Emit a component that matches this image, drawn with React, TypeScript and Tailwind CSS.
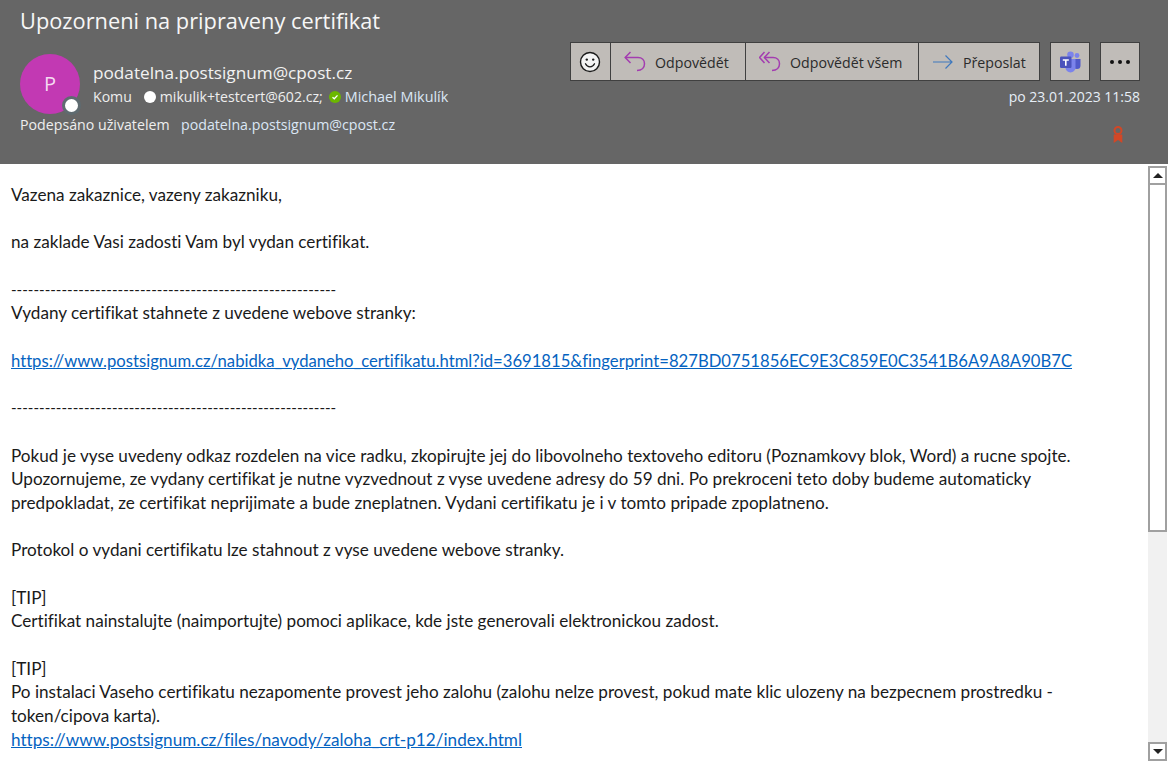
const URL1 = "https://www.postsignum.cz/nabidka_vydaneho_certifikatu.html?id=3691815&fingerprint=827BD0751856EC9E3C859E0C3541B6A9A8A90B7C";
const URL2 = "https://www.postsignum.cz/files/navody/zaloha_crt-p12/index.html";
const DASHES = "----------------------------------------------------------";

const lines = [
    "Vazena zakaznice, vazeny zakazniku,",
    "",
    "na zaklade Vasi zadosti Vam byl vydan certifikat.",
    "",
    DASHES,
    "Vydany certifikat stahnete z uvedene webove stranky:",
    "",
    URL1,
    "",
    DASHES,
    "",
    "Pokud je vyse uvedeny odkaz rozdelen na vice radku, zkopirujte jej do libovolneho textoveho editoru (Poznamkovy blok, Word) a rucne spojte.",
    "Upozornujeme, ze vydany certifikat je nutne vyzvednout z vyse uvedene adresy do 59 dni. Po prekroceni teto doby budeme automaticky",
    "predpokladat, ze certifikat neprijimate a bude zneplatnen. Vydani certifikatu je i v tomto pripade zpoplatneno.",
    "",
    "Protokol o vydani certifikatu lze stahnout z vyse uvedene webove stranky.",
    "",
    "[TIP]",
    "Certifikat nainstalujte (naimportujte) pomoci aplikace, kde jste generovali elektronickou zadost.",
    "",
    "[TIP]",
    "Po instalaci Vaseho certifikatu nezapomente provest jeho zalohu (zalohu nelze provest, pokud mate klic ulozeny na bezpecnem prostredku -",
    "token/cipova karta).",
    URL2,
];

function Smiley() {
    return (
        <svg width="22" height="22" viewBox="0 0 22 22" fill="none">
            <circle cx="11" cy="11" r="9.500" fill="#f4f4f4" stroke="#1a1a1a" strokeWidth="1.400" />
            <circle cx="7.800" cy="8.600" r="1.200" fill="#1a1a1a" />
            <circle cx="14.200" cy="8.600" r="1.200" fill="#1a1a1a" />
            <path d="M6.500 12.800c1 2 2.600 3 4.500 3s3.500-1 4.500-3" stroke="#1a1a1a" strokeWidth="1.300" strokeLinecap="round" />
        </svg>
    );
}

function ReplyIcon() {
    return (
        <svg width="22" height="21" viewBox="0 0 22 21" fill="none" stroke="#a33db0" strokeWidth="1.500" className="mr-[9px]">
            <path d="M6.500 1 1.200 6.500l5.300 5.500" />
            <path d="M1.200 6.500H14c4 0 6.500 2.800 6.500 6.300S18 19.500 13 19.500" />
        </svg>
    );
}

function ReplyAllIcon() {
    return (
        <svg width="22" height="21" viewBox="0 0 22 21" fill="none" stroke="#a33db0" strokeWidth="1.500" className="mr-[9px]">
            <path d="M5.500 1 .6 6.500 5.500 12" />
            <path d="M10.500 1 5.400 6.500l5.100 5.500" />
            <path d="M5.400 6.500H14c4 0 6.500 2.800 6.500 6.300S18 19.500 13 19.500" />
        </svg>
    );
}

function TeamsIcon() {
    return (
        <svg width="22" height="22" viewBox="0 0 22 22">
            <circle cx="18" cy="4.500" r="2.400" fill="#7b83eb" />
            <path d="M14.500 8h7v6.500a3.500 3.500 0 0 1-7 0z" fill="#5059c9" />
            <circle cx="11.500" cy="3.800" r="3.300" fill="#7b83eb" />
            <path d="M6.500 8h10v8.500a5 5 0 0 1-10 0z" fill="#7b83eb" />
            <rect x="1" y="5.500" width="11.500" height="11.500" rx="1.200" fill="#4b53bc" />
            <path d="M3.800 8.300h6v1.500H7.600v5H6v-5H3.800z" fill="#fff" />
        </svg>
    );
}

function ActionButton({ icon, label, className }: { icon: React.ReactNode; label: string; className: string }) {
    return (
        <div className={`flex items-center h-full text-[14.200px] text-[#2b2b2b] ${className}`}>
            {icon}
            <span className="relative top-px">{label}</span>
        </div>
    );
}

function BodyLine({ line }: { line: string }) {
    if (line === URL1) return <div className="h-[23.700px] pt-px text-[16.670px] text-[#0563c1] underline">{line}</div>;
    if (line === URL2) return <div className="h-[23.700px] text-[#0563c1] underline">{line}</div>;
    if (line === DASHES) return <div className="h-[23.700px] text-[15.100px]">{line}</div>;
    return <div className="h-[23.700px]">{line}</div>;
}

export default function App() {
    return (
        <div className="w-[1168px] h-[763px] overflow-hidden bg-white flex flex-col font-['Open_Sans','Noto_Sans',sans-serif]">
            <header className="h-[164px] shrink-0 bg-[#666666] flex justify-between pl-5 pr-7 text-white">
                <div>
                    <div className="text-[21.800px] leading-[28px] mt-[7px] text-[#f7f7f7]">Upozorneni na pripraveny certifikat</div>
                    <div className="flex mt-[19px]">
                        <div className="relative w-[60px] h-[60px] rounded-full bg-[#c239b3] flex items-center justify-center text-[20px] text-[#f5d9f1]">
                            P
                            <div className="absolute left-[42px] top-[42px] w-[19px] h-[19px] rounded-full bg-white border-[3px] border-[#5f6b70]" />
                        </div>
                        <div className="ml-[13px] pt-2">
                            <div className="text-[17.200px] leading-[22px] text-[#f2f2f2]">podatelna.postsignum@cpost.cz</div>
                            <div className="flex items-center text-[14.100px] leading-[20px] mt-[3px] text-[#eeeeee]">
                                <span>Komu</span>
                                <span className="ml-3 w-3 h-3 rounded-full bg-white" />
                                <span className="ml-[4px]">mikulik+testcert@602.cz;</span>
                                <span className="ml-[6px] w-3 h-3 rounded-full bg-[#6bb700] flex items-center justify-center">
                                    <svg width="8" height="8" viewBox="0 0 8 8" fill="none">
                                        <path d="M1.500 4.200 3.300 5.800 6.500 2.400" stroke="#fff" strokeWidth="1.300" />
                                    </svg>
                                </span>
                                <span className="ml-[4px] text-[14.400px] text-[#dbe7f5]">Michael Mikulík</span>
                            </div>
                        </div>
                    </div>
                    <div className="flex text-[14.200px] leading-[20px] mt-px text-[#eeeeee]">
                        <span className="w-[161px]">Podepsáno uživatelem</span>
                        <span className="text-[#dbe7f5]">podatelna.postsignum@cpost.cz</span>
                    </div>
                </div>

                <div className="flex flex-col items-end pt-[42px]">
                    <div className="flex h-[39px]">
                        <div className="flex h-full bg-[#c0bcb8] border border-[#404040]">
                            <div className="w-[39px] pr-px flex items-center justify-center">
                                <Smiley />
                            </div>
                            <ActionButton className="w-[135px] pl-[13px] border-l border-[#404040]" icon={<ReplyIcon />} label="Odpovědět" />
                            <ActionButton className="w-[173px] pl-[13px] border-l border-[#404040]" icon={<ReplyAllIcon />} label="Odpovědět všem" />
                            <ActionButton
                                className="w-[121px] pl-[14px] border-l border-[#404040]"
                                icon={
                                    <svg width="20" height="16" viewBox="0 0 20 16" fill="none" className="mr-[10px]">
                                        <path d="M0 8h19M12.500 1.500 19 8l-6.500 6.500" stroke="#3f78bd" strokeWidth="1.200" />
                                    </svg>
                                }
                                label="Přeposlat"
                            />
                        </div>
                        <div className="ml-[10px] w-10 flex items-center justify-center bg-[#c0bcb8] border border-[#404040]">
                            <TeamsIcon />
                        </div>
                        <div className="ml-[10px] w-10 flex items-center justify-center gap-[4px] bg-[#c0bcb8] border border-[#404040]">
                            <span className="w-[4px] h-[4px] rounded-full bg-[#111]" />
                            <span className="w-[4px] h-[4px] rounded-full bg-[#111]" />
                            <span className="w-[4px] h-[4px] rounded-full bg-[#111]" />
                        </div>
                    </div>
                    <div className="text-[14px] leading-[20px] mt-[6px] text-[#e6eef7]">po 23.01.2023 11:58</div>
                    <svg width="12" height="18" viewBox="0 0 12 18" className="mt-[19px] mr-[16px]" fill="none">
                        <circle cx="6" cy="4.500" r="3.500" stroke="#d24726" strokeWidth="2" />
                        <path d="M1.700 8.500h8.600V17L6 14 1.700 17z" fill="#d24726" />
                    </svg>
                </div>
            </header>

            <div className="flex-1 min-h-0 flex">
                <main className="flex-1 min-w-0 pl-[11px] pt-[19px] font-['Lato','Open_Sans',sans-serif] [font-variant-ligatures:none] text-[17.150px] leading-[23.700px] text-[#1a1a1a] whitespace-pre">
                    {lines.map((line, i) => (
                        <BodyLine key={i} line={line} />
                    ))}
                </main>
                <div className="w-[19px] mr-px shrink-0 mt-[2px] mb-[2px] flex flex-col bg-[#f1f1f1]">
                    <div className="h-[19px] border-2 border-[#a0a0a0] bg-white flex items-center justify-center">
                        <div className="w-0 h-0 border-x-[5px] border-x-transparent border-b-[5px] border-b-[#222]" />
                    </div>
                    <div className="h-[347px] border-2 border-t-0 border-[#a0a0a0] bg-white" />
                    <div className="flex-1" />
                    <div className="h-[19px] border-2 border-[#a0a0a0] bg-white flex items-center justify-center">
                        <div className="w-0 h-0 border-x-[5px] border-x-transparent border-t-[5px] border-t-[#222]" />
                    </div>
                </div>
            </div>
        </div>
    );
}
